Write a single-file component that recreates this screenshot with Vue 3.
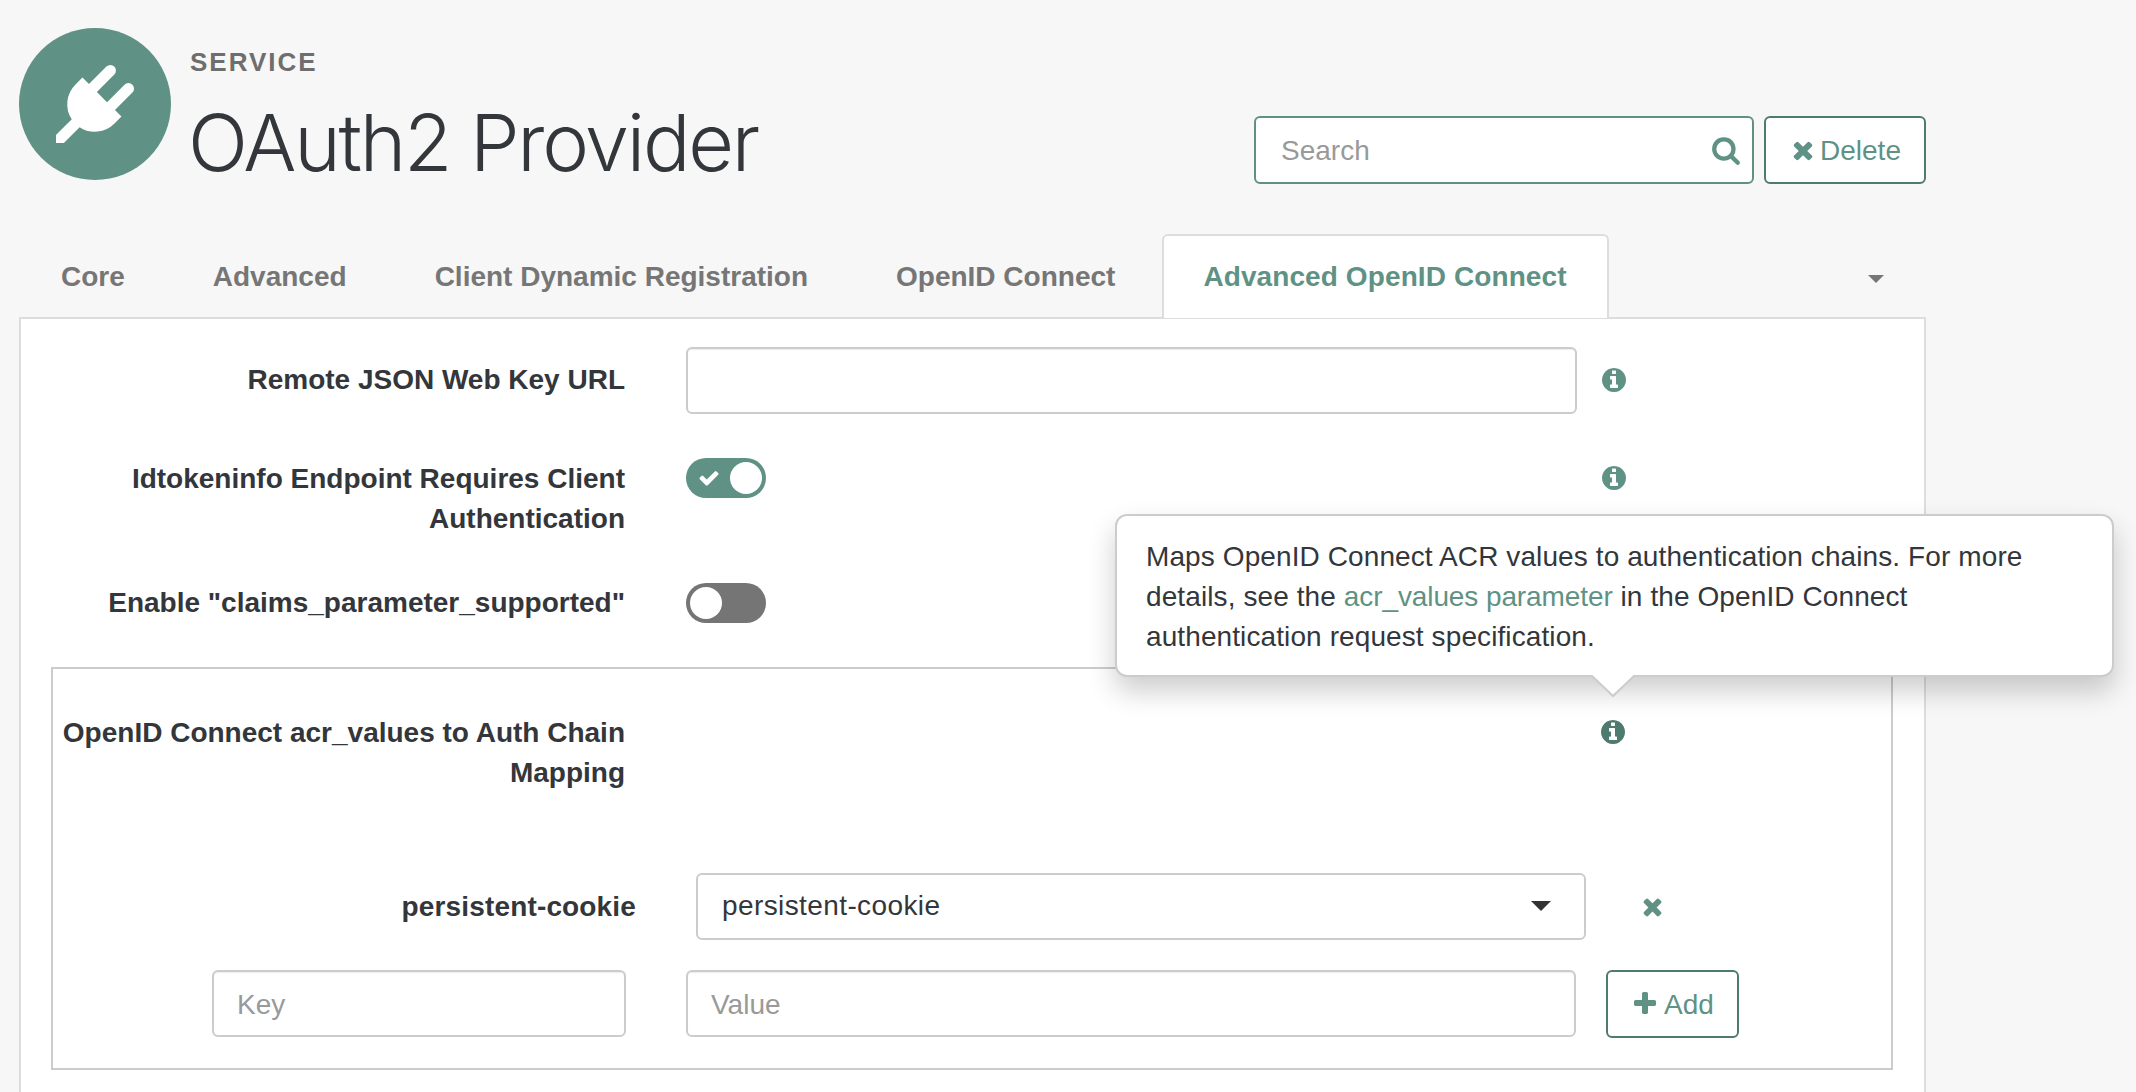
<script setup>
const tabs = ['Core', 'Advanced', 'Client Dynamic Registration', 'OpenID Connect', 'Advanced OpenID Connect']
const activeTab = 'Advanced OpenID Connect'

const plug = 'M1755 453q37 38 37 90.5t-37 90.5l-401 400 150 150-160 160q-163 163-389.5 186.5t-411.5-100.5l-362 362h-181v-181l362-362q-124-185-100.5-411.5t186.5-389.5l160-160 150 150 400-401q38-37 91-37t90 37 37 90.5-37 90.5l-400 401 234 234 401-400q38-37 91-37t90 37z'
const search = 'M1216 832q0-185-131.5-316.5t-316.5-131.5-316.5 131.5-131.5 316.5 131.5 316.5 316.5 131.5 316.5-131.5 131.5-316.5zm512 832q0 52-38 90t-90 38q-54 0-90-38l-343-342q-179 124-399 124-143 0-273.5-55.5t-225-150-150-225-55.5-273.5 55.5-273.5 150-225 225-150 273.5-55.5 273.5 55.5 225 150 150 225 55.5 273.5q0 220-124 399l343 343q37 37 37 90z'
const times = 'M1490 1322q0 40-28 68l-136 136q-28 28-68 28t-68-28l-294-294-294 294q-28 28-68 28t-68-28l-136-136q-28-28-28-68t28-68l294-294-294-294q-28-28-28-68t28-68l136-136q28-28 68-28t68 28l294 294 294-294q28-28 68-28t68 28l136 136q28 28 28 68t-28 68l-294 294 294 294q28 28 28 68z'
const plus = 'M1600 736v192q0 40-28 68t-68 28h-416v416q0 40-28 68t-68 28h-192q-40 0-68-28t-28-68v-416h-416q-40 0-68-28t-28-68v-192q0-40 28-68t68-28h416v-416q0-40 28-68t68-28h192q40 0 68 28t28 68v416h416q40 0 68 28t28 68z'
const check = 'M1671 566q0 40-28 68l-724 724-136 136q-28 28-68 28t-68-28l-136-136-362-362q-28-28-28-68t28-68l136-136q28-28 68-28t68 28l294 295 656-657q28-28 68-28t68 28l136 136q28 28 28 68z'
const info = 'M1152 1376v-160q0-14-9-23t-23-9h-96v-512q0-14-9-23t-23-9h-320q-14 0-23 9t-9 23v160q0 14 9 23t23 9h96v320h-96q-14 0-23 9t-9 23v160q0 14 9 23t23 9h448q14 0 23-9t9-23zm-128-896v-160q0-14-9-23t-23-9h-192q-14 0-23 9t-9 23v160q0 14 9 23t23 9h192q14 0 23-9t9-23zm640 416q0 209-103 385.5t-279.5 279.5-385.5 103-385.5-103-279.5-279.5-103-385.5 103-385.5 279.5-279.5 385.5-103 385.5 103 279.5 279.5 103 385.5z'
</script>

<template>
  <div class="page">
    <header class="head">
      <div class="logo">
        <svg viewBox="0 0 1792 1792" width="78" height="78"><path :d="plug" fill="#fff" /></svg>
      </div>
      <div class="titles">
        <div class="eyebrow">SERVICE</div>
        <h1 class="title">OAuth2 Provider</h1>
      </div>
      <div class="actions">
        <div class="search">
          <input class="search-input" placeholder="Search" />
          <svg viewBox="0 0 1792 1792" width="30" height="30"><path :d="search" /></svg>
        </div>
        <button class="btn btn-delete">
          <svg viewBox="0 0 1792 1792" width="28" height="28"><path :d="times" /></svg>
          <span>Delete</span>
        </button>
      </div>
    </header>

    <nav class="tabs">
      <a v-for="t in tabs" :key="t" class="tab" :class="{ active: t === activeTab }">{{ t }}</a>
      <span class="tabs-caret"></span>
    </nav>

    <section class="panel">
      <div class="row first">
        <label class="label">Remote JSON Web Key URL</label>
        <input class="field" />
        <svg class="info" viewBox="0 0 1792 1792"><path :d="info" /></svg>
      </div>

      <div class="row second">
        <label class="label">Idtokeninfo Endpoint Requires Client Authentication</label>
        <div class="toggle on">
          <svg viewBox="0 0 1792 1792" width="22" height="22"><path :d="check" fill="#fff" /></svg>
          <span class="knob"></span>
        </div>
        <svg class="info" viewBox="0 0 1792 1792"><path :d="info" /></svg>
      </div>

      <div class="row">
        <label class="label">Enable "claims_parameter_supported"</label>
        <div class="toggle off"><span class="knob"></span></div>
      </div>

      <fieldset class="mapping">
        <div class="row map-head">
          <label class="label">OpenID Connect acr_values to Auth Chain Mapping</label>
          <div class="spacer"></div>
          <svg class="info dark" viewBox="0 0 1792 1792"><path :d="info" /></svg>
        </div>

        <div class="entry">
          <label class="entry-label">persistent-cookie</label>
          <div class="select">
            persistent-cookie
            <span class="select-caret"></span>
          </div>
          <svg class="entry-remove" viewBox="0 0 1792 1792" width="27" height="27"><path :d="times" /></svg>
        </div>

        <div class="add-row">
          <input class="field key" placeholder="Key" />
          <input class="field value" placeholder="Value" />
          <button class="btn btn-add">
            <svg viewBox="0 0 1792 1792" width="28" height="28"><path :d="plus" /></svg>
            <span>Add</span>
          </button>
        </div>
      </fieldset>
    </section>

    <div class="popover">
      <p>Maps OpenID Connect ACR values to authentication chains. For more details, see the <a>acr_values parameter</a> in the OpenID Connect authentication request specification.</p>
      <svg class="popover-arrow" viewBox="0 0 46 23" width="46" height="23">
        <polygon points="1,0 45,0 23,21" fill="#fff" />
        <polyline points="1,0 23,21 45,0" fill="none" stroke="#ccc" stroke-width="2" />
      </svg>
    </div>
  </div>
</template>

<style scoped>
.page {
  position: relative;
  height: 1092px;
  overflow: hidden;
  background: #f7f7f7;
  color: #33363a;
  font-family: "Liberation Sans", Arial, sans-serif;
  font-size: 28px;
  line-height: 40px;
}
.head {
  display: flex;
  width: 1907px;
  height: 206px;
  margin-left: 19px;
  padding-top: 28px;
  box-sizing: border-box;
}
.logo {
  display: flex;
  align-items: center;
  justify-content: center;
  width: 152px;
  height: 152px;
  border-radius: 50%;
  background: #5f9284;
}
.titles {
  margin-left: 19px;
  padding-top: 19px;
}
.eyebrow {
  color: #6e6e6e;
  font-size: 26px;
  font-weight: 700;
  line-height: 30px;
  letter-spacing: 2px;
}
.title {
  margin: 20px 0 0 -2px;
  font-family: Inter, sans-serif;
  font-size: 79px;
  font-weight: 300;
  line-height: 90px;
  letter-spacing: -2.3px;
}
.actions {
  display: flex;
  gap: 10px;
  margin-left: auto;
  padding-top: 88px;
}
.search {
  display: flex;
  align-items: center;
  box-sizing: border-box;
  width: 500px;
  height: 68px;
  padding: 0 11px 0 25px;
  border: 2px solid #5f9284;
  border-radius: 6px;
  background: #fff;
  fill: #5f9284;
}
.search-input {
  flex: 1;
  min-width: 0;
  padding: 2px 0 0;
  border: 0;
  outline: 0;
  background: none;
  font: inherit;
}
.btn {
  display: flex;
  align-items: center;
  justify-content: center;
  box-sizing: border-box;
  height: 68px;
  padding: 0;
  border: 2px solid #4f7a6f;
  border-radius: 6px;
  background: #fff;
  color: #5f9284;
  fill: #5f9284;
  font: inherit;
}
.btn span {
  padding-top: 2px;
}
.btn-delete {
  gap: 3px;
  width: 162px;
}
.btn-add {
  gap: 5px;
  width: 133px;
  margin-left: 30px;
}
input::placeholder {
  color: #999;
  opacity: 1;
}
.tabs {
  position: relative;
  display: flex;
  gap: 6px;
  width: 1906px;
  height: 84px;
  margin-left: 20px;
  margin-top: 28px;
  margin-bottom: -1px;
}
.tab {
  box-sizing: border-box;
  height: 84px;
  padding: 23px 41px 0;
  color: #767676;
  font-weight: 700;
  white-space: nowrap;
}
.tab.active {
  position: relative;
  z-index: 1;
  border: 2px solid #ddd;
  border-bottom: 0;
  border-radius: 6px 6px 0 0;
  background: #fff;
  color: #5f9284;
  padding: 21px 40px 0 39px;
  letter-spacing: 0.1px;
}
.tabs-caret {
  position: absolute;
  top: 41px;
  right: 42px;
  border-top: 8px solid #767676;
  border-left: 8px solid transparent;
  border-right: 8px solid transparent;
}
.panel {
  box-sizing: border-box;
  width: 1907px;
  margin-left: 19px;
  padding: 28px 0 40px;
  border: 2px solid #ddd;
  background: #fff;
}
.row {
  display: grid;
  grid-template-columns: 604px 951px 28px;
  align-items: start;
  margin-bottom: 44px;
}
.row .label {
  text-align: right;
  font-weight: 700;
}
.row > .field,
.row > .toggle {
  margin-left: 61px;
}
.row > .field {
  width: 891px;
}
.first {
  margin-bottom: 45px;
}
.first .label {
  padding-top: 13px;
}
.first > .info {
  margin-top: 19px;
}
.second > .toggle {
  margin-top: -1px;
}
.second > .info {
  margin-top: 5px;
}
.info {
  width: 28px;
  height: 28px;
  margin-top: 6px;
  margin-left: 24px;
  fill: #5f9284;
}
.info.dark {
  fill: #4f7a6f;
}
.field {
  box-sizing: border-box;
  height: 67px;
  padding: 2px 23px 0;
  border: 2px solid #ccc;
  border-radius: 6px;
  outline: 0;
  background: #fff;
  box-shadow: inset 0 1px 1px rgba(0, 0, 0, 0.075);
  font: inherit;
}
.toggle {
  position: relative;
  display: flex;
  align-items: center;
  box-sizing: border-box;
  width: 80px;
  height: 40px;
  border-radius: 20px;
}
.toggle svg {
  margin-left: 12px;
}
.toggle.on {
  background: #5f9284;
}
.toggle.off {
  background: #757575;
}
.knob {
  position: absolute;
  top: 4px;
  width: 32px;
  height: 32px;
  border-radius: 50%;
  background: #fff;
}
.on .knob {
  right: 4px;
}
.off .knob {
  left: 4px;
}
.mapping {
  box-sizing: border-box;
  width: 1842px;
  height: 403px;
  margin: 0 0 0 30px;
  padding: 44px 0 0;
  border: 2px solid #ccc;
}
.map-head {
  grid-template-columns: 572px 951px 28px;
  margin-bottom: 80px;
}
.map-head .info {
  margin-top: 5px;
  margin-left: 23px;
}
.entry {
  display: flex;
  align-items: center;
  height: 67px;
}
.entry-label {
  width: 583px;
  text-align: right;
  font-weight: 700;
  letter-spacing: 0.15px;
}
.select {
  position: relative;
  box-sizing: border-box;
  width: 890px;
  height: 67px;
  margin-left: 60px;
  padding: 11px 24px;
  border: 2px solid #ccc;
  border-radius: 6px;
  letter-spacing: 0.4px;
}
.select-caret {
  position: absolute;
  top: 26px;
  right: 33px;
  border-top: 10px solid #333;
  border-left: 10px solid transparent;
  border-right: 10px solid transparent;
}
.entry-remove {
  margin-left: 53px;
  fill: #5f9284;
}
.add-row {
  display: flex;
  align-items: flex-start;
  margin-top: 30px;
  padding-left: 159px;
}
.key {
  width: 414px;
}
.value {
  width: 890px;
  margin-left: 60px;
}
.popover {
  position: absolute;
  top: 514px;
  left: 1115px;
  box-sizing: border-box;
  width: 999px;
  height: 163px;
  padding: 21px 29px;
  border: 2px solid #ccc;
  border-radius: 12px;
  background: #fff;
  box-shadow: 0 14px 28px rgba(0, 0, 0, 0.2);
  letter-spacing: 0.1px;
}
.popover p {
  margin: 0;
}
.popover a {
  color: #5f9284;
  letter-spacing: -0.1px;
}
.popover-arrow {
  position: absolute;
  left: 473px;
  top: 159px;
  display: block;
}
</style>

<style>
html, body { background: #f7f7f7; }
</style>
